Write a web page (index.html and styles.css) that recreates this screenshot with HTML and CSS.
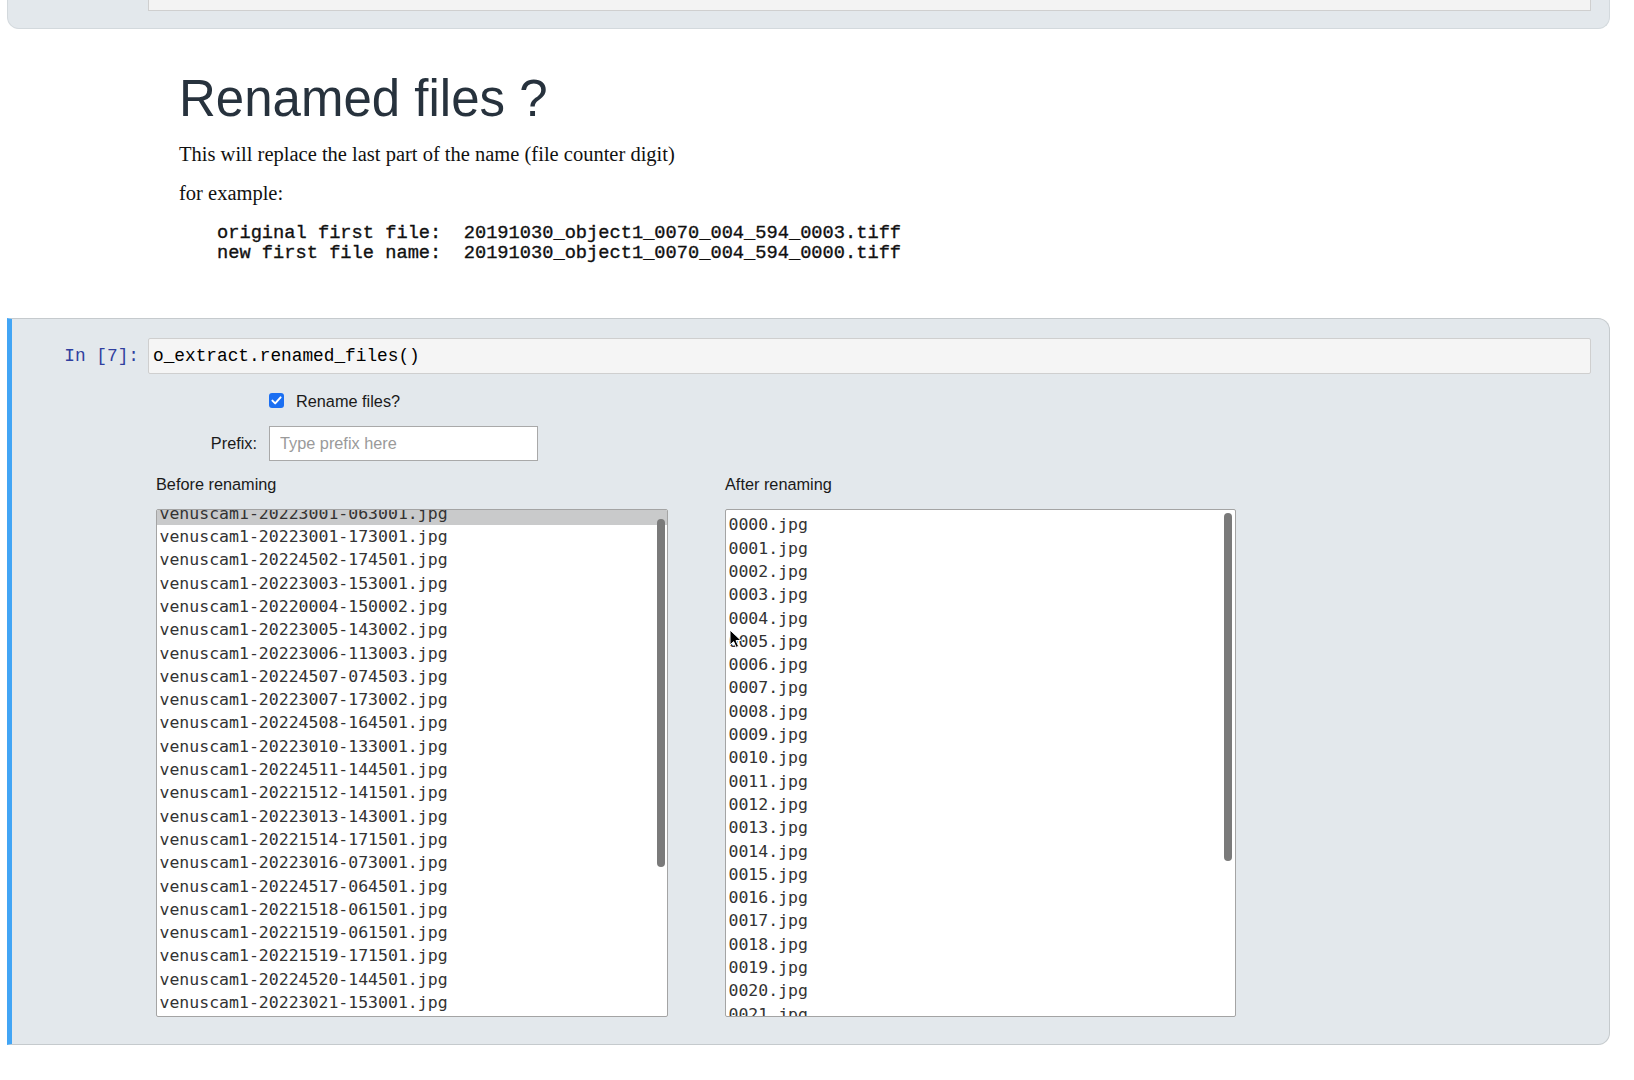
FILE: index.html
```html
<!DOCTYPE html>
<html>
<head>
<meta charset="utf-8">
<link rel="stylesheet" href="styles.css">
</head>
<body>
<div class="cell cell-top"><div class="stub"></div></div>

<div class="md">
  <h1 class="title">Renamed files ?</h1>
  <p class="p1">This will replace the last part of the name (file counter digit)</p>
  <p class="p2">for example:</p>
  <pre class="example">original first file:  20191030_object1_0070_004_594_0003.tiff
new first file name:  20191030_object1_0070_004_594_0000.tiff</pre>
</div>

<div class="cell cell-sel">
  <div class="in-row">
    <div class="prompt">In&nbsp;[7]:</div>
    <div class="code">o_extract.renamed_files()</div>
  </div>
  <div class="out">
    <div class="wrow w-check">
      <div class="desc"></div>
      <div class="chk">
        <span class="box"><svg width="15" height="15" viewBox="0 0 15 15"><path d="M3.4 7.6 L6.2 10.4 L11.6 4.4" fill="none" stroke="#fff" stroke-width="2" stroke-linecap="round" stroke-linejoin="round"/></svg></span>
        <span class="chk-label">Rename files?</span>
      </div>
    </div>
    <div class="wrow w-prefix">
      <div class="desc">Prefix:</div>
      <input class="prefix" type="text" placeholder="Type prefix here">
    </div>
    <div class="cols">
      <div class="col">
        <div class="lbl">Before renaming</div>
        <div class="list list-before">
          <div class="items items-before">
            <div class="item sel">venuscam1-20223001-063001.jpg</div>
            <div class="item">venuscam1-20223001-173001.jpg</div>
            <div class="item">venuscam1-20224502-174501.jpg</div>
            <div class="item">venuscam1-20223003-153001.jpg</div>
            <div class="item">venuscam1-20220004-150002.jpg</div>
            <div class="item">venuscam1-20223005-143002.jpg</div>
            <div class="item">venuscam1-20223006-113003.jpg</div>
            <div class="item">venuscam1-20224507-074503.jpg</div>
            <div class="item">venuscam1-20223007-173002.jpg</div>
            <div class="item">venuscam1-20224508-164501.jpg</div>
            <div class="item">venuscam1-20223010-133001.jpg</div>
            <div class="item">venuscam1-20224511-144501.jpg</div>
            <div class="item">venuscam1-20221512-141501.jpg</div>
            <div class="item">venuscam1-20223013-143001.jpg</div>
            <div class="item">venuscam1-20221514-171501.jpg</div>
            <div class="item">venuscam1-20223016-073001.jpg</div>
            <div class="item">venuscam1-20224517-064501.jpg</div>
            <div class="item">venuscam1-20221518-061501.jpg</div>
            <div class="item">venuscam1-20221519-061501.jpg</div>
            <div class="item">venuscam1-20221519-171501.jpg</div>
            <div class="item">venuscam1-20224520-144501.jpg</div>
            <div class="item">venuscam1-20223021-153001.jpg</div>
          </div>
          <div class="thumb thumb-before"></div>
        </div>
      </div>
      <div class="col">
        <div class="lbl">After renaming</div>
        <div class="list list-after">
          <div class="items items-after">
            <div class="item">0000.jpg</div>
            <div class="item">0001.jpg</div>
            <div class="item">0002.jpg</div>
            <div class="item">0003.jpg</div>
            <div class="item">0004.jpg</div>
            <div class="item">0005.jpg</div>
            <div class="item">0006.jpg</div>
            <div class="item">0007.jpg</div>
            <div class="item">0008.jpg</div>
            <div class="item">0009.jpg</div>
            <div class="item">0010.jpg</div>
            <div class="item">0011.jpg</div>
            <div class="item">0012.jpg</div>
            <div class="item">0013.jpg</div>
            <div class="item">0014.jpg</div>
            <div class="item">0015.jpg</div>
            <div class="item">0016.jpg</div>
            <div class="item">0017.jpg</div>
            <div class="item">0018.jpg</div>
            <div class="item">0019.jpg</div>
            <div class="item">0020.jpg</div>
            <div class="item">0021.jpg</div>
          </div>
          <div class="thumb thumb-after"></div>
          <svg class="cursor" width="14" height="20" viewBox="0 0 14 20"><path d="M1 1 L1 16 L4.6 12.6 L7.2 18.4 L9.6 17.3 L7 11.6 L12 11.4 Z" fill="#000" stroke="#fff" stroke-width="1"/></svg>
        </div>
      </div>
    </div>
  </div>
</div>
</body>
</html>
```

FILE: styles.css
```css
html, body {
  margin: 0;
  padding: 0;
  background: #ffffff;
}
body {
  font-family: "Liberation Sans", Arial, sans-serif;
  color: #111;
}

.cell {
  box-sizing: border-box;
  width: 1603px;
  margin-left: 7px;
  background: #e3e8ec;
}

.cell-top {
  height: 29px;
  border: 1px solid #d3d9dd;
  border-top: none;
  border-radius: 0 0 12px 12px;
  padding: 0 18px 0 140px;
}
.stub {
  height: 10px;
  background: #f3f3f3;
  border: 1px solid #cfcfcf;
  border-top: none;
}

.md {
  padding-left: 179px;
}
.title {
  margin: 42px 0 0;
  font: 400 51px/56px "Liberation Sans", Arial, sans-serif;
  color: #27323d;
}
.p1, .p2 {
  font: 20.5px/24px "Liberation Serif", "Times New Roman", serif;
  color: #111;
}
.p1 { margin: 15px 0 0; }
.p2 { margin: 15px 0 0; }
.example {
  margin: 17.7px 0 0 38px;
  font: 18.7px/20.7px "Liberation Mono", "Courier New", monospace;
  color: #111;
  -webkit-text-stroke: 0.35px #111;
}

.cell-sel {
  margin-top: 53.9px;
  height: 727px;
  border: 1px solid #c5cacd;
  border-left: 5px solid #42a5f5;
  border-radius: 0 12px 12px 0;
  padding: 19px 18px 0 0;
}
.in-row {
  display: flex;
  height: 36px;
}
.prompt {
  box-sizing: border-box;
  width: 136px;
  padding-right: 9px;
  text-align: right;
  font: 17.8px/36px "Liberation Mono", "Courier New", monospace;
  color: #303f9f;
}
.code {
  flex: 1;
  background: #f5f5f5;
  border: 1px solid #cfcfcf;
  border-radius: 2px;
  padding-left: 4px;
  font: 17.8px/34px "Liberation Mono", "Courier New", monospace;
  color: #000;
}

.out {
  padding-left: 144px;
}
.wrow {
  display: flex;
  align-items: center;
  gap: 12px;
  font-size: 16.3px;
  color: #1a1a1a;
}
.w-check {
  margin-top: 14px;
  height: 28px;
}
.w-prefix {
  margin-top: 10px;
  height: 35px;
}
.desc {
  width: 101px;
  text-align: right;
}
.chk {
  display: flex;
  align-items: center;
  gap: 12px;
}
.box {
  display: block;
  width: 15px;
  height: 15px;
  border-radius: 3px;
  background: #1b6ff2;
  margin-top: -3px;
}
.box svg { display: block; }
.prefix {
  box-sizing: border-box;
  width: 269px;
  height: 35px;
  margin: 0;
  padding: 0 10px;
  border: 1px solid #a9a9a9;
  border-radius: 0;
  background: #fff;
  font: 16.3px "Liberation Sans", Arial, sans-serif;
  outline: none;
}
.prefix::placeholder {
  color: #9a9a9a;
}

.cols {
  display: flex;
  gap: 57px;
  margin-top: 13px;
}
.lbl {
  height: 20px;
  line-height: 20px;
  font-size: 16.3px;
  color: #1a1a1a;
  margin-bottom: 15px;
}
.list {
  position: relative;
  box-sizing: border-box;
  height: 508px;
  background: #fff;
  border: 1px solid #a4a4a4;
  border-radius: 2px;
  overflow: hidden;
}
.list-before { width: 512px; }
.list-after { width: 511px; }
.items {
  font: 16.5px/23.3px "DejaVu Sans Mono", monospace;
  color: #333;
}
.items-before { margin-top: -8.2px; }
.items-after { padding-top: 3.4px; }
.item {
  padding-left: 2.5px;
  white-space: nowrap;
}
.item.sel {
  background: #c9cacb;
}
.thumb {
  position: absolute;
  width: 8px;
  height: 348px;
  border-radius: 4px;
  background: #7a7a7a;
}
.thumb-before { left: 500px; top: 9px; }
.thumb-after { left: 498px; top: 3px; }
.cursor {
  position: absolute;
  left: 3px;
  top: 119px;
}
```
